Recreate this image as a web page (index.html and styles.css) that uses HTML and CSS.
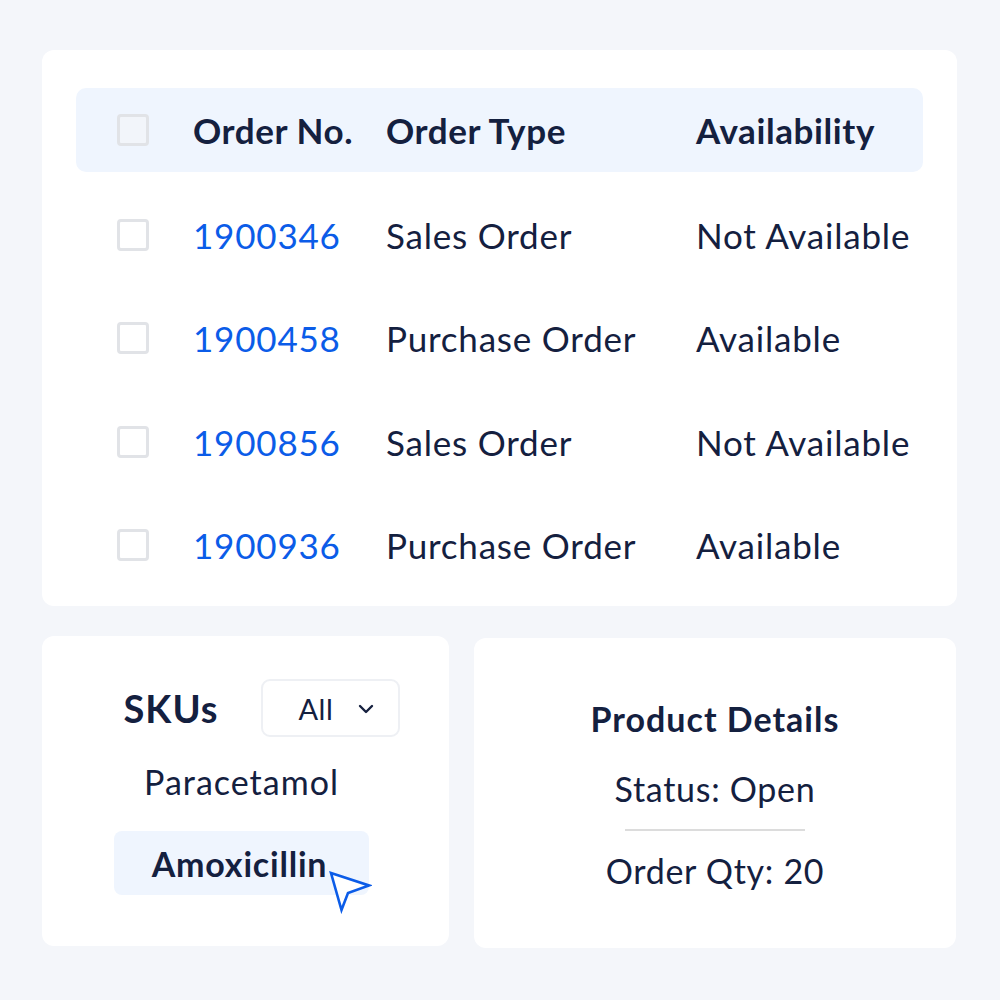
FILE: index.html
```html
<!DOCTYPE html>
<html>
<head>
<meta charset="utf-8">
<link rel="stylesheet" href="styles.css">
</head>
<body>
<div class="page">
  <div class="card table-card">
    <div class="grid head">
      <span class="cb"></span>
      <span>Order No.</span>
      <span>Order Type</span>
      <span>Availability</span>
    </div>
    <div class="grid row"><span class="cb"></span><span class="num">1900346</span><span>Sales Order</span><span>Not Available</span></div>
    <div class="grid row"><span class="cb"></span><span class="num">1900458</span><span>Purchase Order</span><span>Available</span></div>
    <div class="grid row"><span class="cb"></span><span class="num">1900856</span><span>Sales Order</span><span>Not Available</span></div>
    <div class="grid row"><span class="cb"></span><span class="num">1900936</span><span>Purchase Order</span><span>Available</span></div>
  </div>
  <div class="bottom">
    <div class="card sku-card">
      <div class="sku-head">
        <span class="sku-title">SKUs</span>
        <div class="select">
          <span>All</span>
          <svg class="chev" width="16" height="10" viewBox="0 0 16 10"><path d="M2 2 L8 8 L14 2" fill="none" stroke="#16213f" stroke-width="2.4" stroke-linecap="round" stroke-linejoin="round"/></svg>
        </div>
      </div>
      <div class="sku-item">Paracetamol</div>
      <div class="sku-item active">Amoxicillin
        <svg class="cursor" width="44" height="44" viewBox="0 0 44 44"><path d="M3 3 L41 15.5 L20 23 L13.5 40 Z" fill="#fff" stroke="#0b5ce8" stroke-width="2.6" stroke-linejoin="miter"/></svg>
      </div>
    </div>
    <div class="card detail-card">
      <div class="detail-title">Product Details</div>
      <div class="detail-line">Status: Open</div>
      <div class="divider"></div>
      <div class="detail-line">Order Qty: 20</div>
    </div>
  </div>
</div>
</body>
</html>
```
FILE: styles.css
```css
* { box-sizing: border-box; }
html, body { margin: 0; padding: 0; }
body {
  background: #f4f6fa;
  font-family: "Lato", "Liberation Sans", sans-serif;
  color: #14203f;
  width: 1000px;
  height: 1000px;
  overflow: hidden;
}
.page {
  padding: 50px 43px 0 42px;
}
.card {
  background: #ffffff;
  border-radius: 12px;
}
.table-card {
  width: 915px;
  height: 556px;
  padding: 38px 34px 0 34px;
}
.grid {
  display: grid;
  grid-template-columns: 76px 193px 310px 1fr;
  align-items: center;
  padding-left: 41px;
  font-size: 35px;
  letter-spacing: 0.8px;
}
.head {
  height: 84px;
  background: #eff5fe;
  border-radius: 10px;
  font-weight: 700;
  letter-spacing: 0.6px;
}
.row {
  height: 103.5px;
}
.head + .row { margin-top: 11px; }
.cb {
  width: 32px;
  height: 32px;
  border: 3px solid #e1e3e7;
  border-radius: 4px;
  background: #fff;
}
.head .cb { background: #f2f5fa; }
.num { color: #0b5ce8; }
.bottom {
  display: flex;
  gap: 25px;
  margin-top: 30px;
}
.sku-card {
  width: 407px;
  height: 310px;
  display: flex;
  flex-direction: column;
  align-items: center;
  padding-top: 43px;
  padding-right: 8px;
}
.sku-head {
  display: flex;
  align-items: center;
  gap: 42px;
  margin-left: 40px;
}
.sku-title {
  font-weight: 700;
  font-size: 38px;
  letter-spacing: 1px;
}
.select {
  width: 139px;
  height: 58px;
  border: 2px solid #eef0f4;
  border-radius: 9px;
  display: flex;
  align-items: center;
  padding-left: 36px;
  gap: 25px;
  font-size: 29px;
  letter-spacing: 0.5px;
}
.chev { margin-top: 1px; }
.sku-item {
  font-size: 34px;
  margin-top: 12px;
  height: 64px;
  display: flex;
  align-items: center;
  justify-content: center;
  width: 255px;
  letter-spacing: 1px;
}
.sku-item.active {
  position: relative;
  margin-top: 18px;
  background: #eff5fe;
  border-radius: 8px;
  font-weight: 700;
  padding-right: 4px;
  letter-spacing: 0.8px;
}
.cursor {
  position: absolute;
  left: 214px;
  top: 39px;
}
.detail-card {
  width: 482px;
  height: 310px;
  margin-top: 2px;
  display: flex;
  flex-direction: column;
  align-items: center;
  justify-content: center;
  padding-top: 3px;
}
.detail-title {
  font-weight: 700;
  font-size: 34px;
  letter-spacing: 1px;
}
.detail-line {
  font-size: 34px;
  letter-spacing: 0.7px;
}
.detail-title + .detail-line { margin-top: 29px; }
.divider {
  width: 180px;
  height: 2px;
  background: #dcdcdc;
  margin: 20px 0 19px;
}
```
